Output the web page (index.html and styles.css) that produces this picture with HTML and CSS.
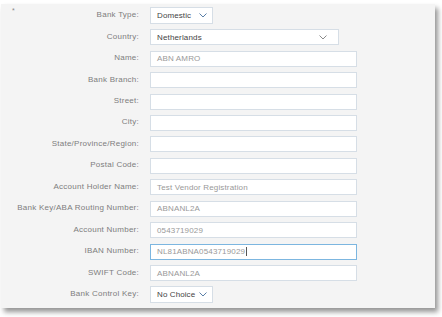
FILE: index.html
```html
<!DOCTYPE html>
<html lang="en">
<head>
<meta charset="utf-8">
<title>Bank Details</title>
<link rel="stylesheet" href="styles.css">
</head>
<body>
<div class="panel">
  <form class="form">
    <div class="label first"><span class="req">*</span><span>Bank Type:</span></div>
    <div class="field"><div class="select sm"><span>Domestic</span><svg class="chev" width="8" height="5" viewBox="0 0 8 5"><path d="M0.5 0.5 L4 4 L7.5 0.5" fill="none" stroke="#5a7fa8" stroke-width="1"/></svg></div></div>

    <div class="label">Country:</div>
    <div class="field"><div class="select country"><span>Netherlands</span><svg class="chev" width="8" height="5" viewBox="0 0 8 5"><path d="M0.5 0.5 L4 4 L7.5 0.5" fill="none" stroke="#8a8a8a" stroke-width="1"/></svg></div></div>

    <div class="label">Name:</div>
    <div class="field"><div class="input">ABN AMRO</div></div>

    <div class="label">Bank Branch:</div>
    <div class="field"><div class="input"></div></div>

    <div class="label">Street:</div>
    <div class="field"><div class="input"></div></div>

    <div class="label">City:</div>
    <div class="field"><div class="input"></div></div>

    <div class="label">State/Province/Region:</div>
    <div class="field"><div class="input"></div></div>

    <div class="label">Postal Code:</div>
    <div class="field"><div class="input"></div></div>

    <div class="label">Account Holder Name:</div>
    <div class="field"><div class="input">Test Vendor Registration</div></div>

    <div class="label">Bank Key/ABA Routing Number:</div>
    <div class="field"><div class="input">ABNANL2A</div></div>

    <div class="label">Account Number:</div>
    <div class="field"><div class="input">0543719029</div></div>

    <div class="label">IBAN Number:</div>
    <div class="field"><div class="input focus">NL81ABNA0543719029<span class="caret"></span></div></div>

    <div class="label">SWIFT Code:</div>
    <div class="field"><div class="input">ABNANL2A</div></div>

    <div class="label">Bank Control Key:</div>
    <div class="field"><div class="select sm"><span>No Choice</span><svg class="chev" width="8" height="5" viewBox="0 0 8 5"><path d="M0.5 0.5 L4 4 L7.5 0.5" fill="none" stroke="#5a7fa8" stroke-width="1"/></svg></div></div>
  </form>
</div>
</body>
</html>
```
FILE: styles.css
```css
html, body {
  margin: 0;
  padding: 0;
  background: #ffffff;
}
body {
  font-family: "Liberation Sans", Arial, sans-serif;
  width: 442px;
  height: 317px;
  overflow: hidden;
}
.panel {
  margin: 4px 0 0 1px;
  width: 434px;
  height: 304px;
  box-sizing: border-box;
  background: #f4f4f4;
  box-shadow: 3px 4px 5px rgba(0, 0, 0, 0.42);
  padding-top: 1px;
}
.form {
  display: grid;
  grid-template-columns: 138px 1fr;
  grid-auto-rows: 21.46px;
  column-gap: 11px;
  align-items: center;
}
.label {
  text-align: right;
  font-size: 8px;
  letter-spacing: 0.25px;
  color: #7d7d7d;
  white-space: nowrap;
  padding-bottom: 2px;
}
.label.first {
  display: flex;
  justify-content: space-between;
  align-items: flex-start;
  padding-left: 11px;
}
.req {
  font-size: 7px;
  color: #888;
  margin-top: -3px;
}
.field {
  display: flex;
  align-items: center;
}
.input, .select {
  box-sizing: border-box;
  height: 16px;
  background: #ffffff;
  border: 1px solid #d6dee6;
  font-size: 8px;
  letter-spacing: 0.15px;
  color: #999999;
  padding: 0 6px;
  display: flex;
  align-items: center;
  white-space: nowrap;
}
.input {
  width: 207px;
}
.input.focus {
  border-color: #7cb6e0;
}
.caret {
  display: inline-block;
  width: 1px;
  height: 9px;
  background: #555;
  margin-left: 1px;
}
.select {
  color: #444444;
  justify-content: space-between;
}
.select.sm {
  width: 63px;
  height: 17px;
  padding: 0 5px 0 6px;
  letter-spacing: 0.1px;
}
.select.country {
  width: 189px;
}
.chev {
  flex: none;
  margin-left: 4px;
}
.select.country .chev {
  margin-right: 5px;
}
```
